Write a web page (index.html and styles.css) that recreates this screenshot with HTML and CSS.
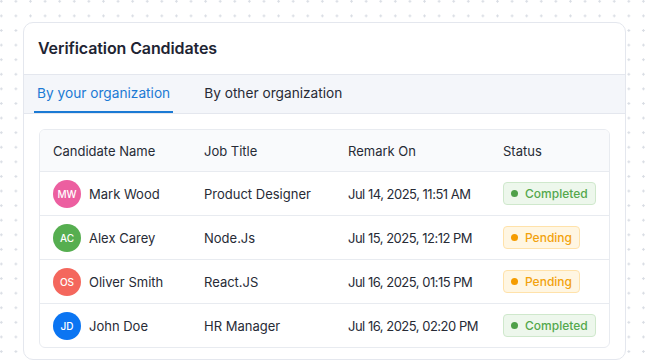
FILE: index.html
```html
<!DOCTYPE html>
<html lang="en">
<head>
  <meta charset="UTF-8">
  <title>Verification Candidates</title>
  <link rel="stylesheet" href="styles.css">
</head>
<body>
  <div class="card">
    <h2 class="card-title">Verification Candidates</h2>

    <div class="tabs">
      <div class="tab active">By your organization</div>
      <div class="tab">By other organization</div>
    </div>

    <div class="card-body">
      <div class="table">
        <div class="row head">
          <div>Candidate Name</div>
          <div>Job Title</div>
          <div>Remark On</div>
          <div>Status</div>
        </div>

        <div class="row">
          <div class="person"><span class="avatar pink">MW</span>Mark Wood</div>
          <div>Product Designer</div>
          <div class="date">Jul 14, 2025, 11:51 AM</div>
          <div><span class="badge done">Completed</span></div>
        </div>

        <div class="row">
          <div class="person"><span class="avatar green">AC</span>Alex Carey</div>
          <div>Node.Js</div>
          <div class="date">Jul 15, 2025, 12:12 PM</div>
          <div><span class="badge pending">Pending</span></div>
        </div>

        <div class="row">
          <div class="person"><span class="avatar red">OS</span>Oliver Smith</div>
          <div>React.JS</div>
          <div class="date">Jul 16, 2025, 01:15 PM</div>
          <div><span class="badge pending">Pending</span></div>
        </div>

        <div class="row">
          <div class="person"><span class="avatar blue">JD</span>John Doe</div>
          <div>HR Manager</div>
          <div class="date">Jul 16, 2025, 02:20 PM</div>
          <div><span class="badge done">Completed</span></div>
        </div>
      </div>
    </div>
  </div>
</body>
</html>
```

FILE: styles.css
```css
body {
  margin: 0;
  height: 362px;
  overflow: hidden;
  font-family: Inter, "Noto Sans", sans-serif;
  color: #272b36;
  background-color: #fff;
  background-image: radial-gradient(circle, #d9dde4 1px, transparent 1.4px);
  background-size: 14.6px 14.6px;
  background-position: -6px -6px;
}
.card {
  margin: 22px 0 0 23px;
  width: 601px;
  height: 336px;
  background: #fff;
  border: 1px solid #e4e7ee;
  border-radius: 10px;
  overflow: hidden;
}
.card-title {
  margin: 0;
  padding: 15px 14px 0;
  height: 36px;
  font-size: 16px;
  font-weight: 600;
  letter-spacing: -0.1px;
  color: #1e2433;
}
.tabs {
  display: flex;
  gap: 28px;
  height: 38px;
  padding: 0 10px;
  background: #f4f6fa;
  border-top: 1px solid #e4e7ee;
  border-bottom: 1px solid #e4e7ee;
}
.tab {
  display: flex;
  align-items: center;
  padding: 0 3px;
  font-size: 13.7px;
  color: #272b36;
  border-bottom: 2px solid transparent;
}
.tab.active {
  color: #1b7ad4;
  border-bottom-color: #1b7ad4;
}
.card-body {
  padding: 15px 15px 0;
}
.table {
  border: 1px solid #e8ebf0;
  border-radius: 6px;
  overflow: hidden;
}
.row {
  display: grid;
  grid-template-columns: 151px 144px 155px 1fr;
  align-items: center;
  height: 43px;
  padding-left: 13px;
  font-size: 13px;
  border-top: 1px solid #e8ebf0;
}
.row.head {
  height: 41px;
  border-top: none;
  background: #f9fafc;
}
.date {
  letter-spacing: -0.5px;
}
.person {
  display: flex;
  align-items: center;
  gap: 8px;
}
.avatar {
  width: 28px;
  height: 28px;
  border-radius: 50%;
  display: flex;
  align-items: center;
  justify-content: center;
  color: #fff;
  font-size: 10px;
  font-weight: 500;
}
.pink { background: #ec5fa0; }
.green { background: #56ae50; }
.red { background: #f4675d; }
.blue { background: #0b75f2; }
.badge {
  display: inline-flex;
  align-items: center;
  gap: 7px;
  height: 21px;
  padding: 0 7px;
  border-radius: 4px;
  font-size: 12px;
  font-weight: 500;
}
.badge::before {
  content: "";
  width: 7px;
  height: 7px;
  border-radius: 50%;
}
.badge.done {
  color: #54a84c;
  background: #edf7ec;
  border: 1px solid #cfe8cc;
}
.badge.done::before { background: #4fa049; }
.badge.pending {
  color: #f2a20d;
  background: #fff6e2;
  border: 1px solid #ffe2aa;
}
.badge.pending::before { background: #f59c00; }
```
